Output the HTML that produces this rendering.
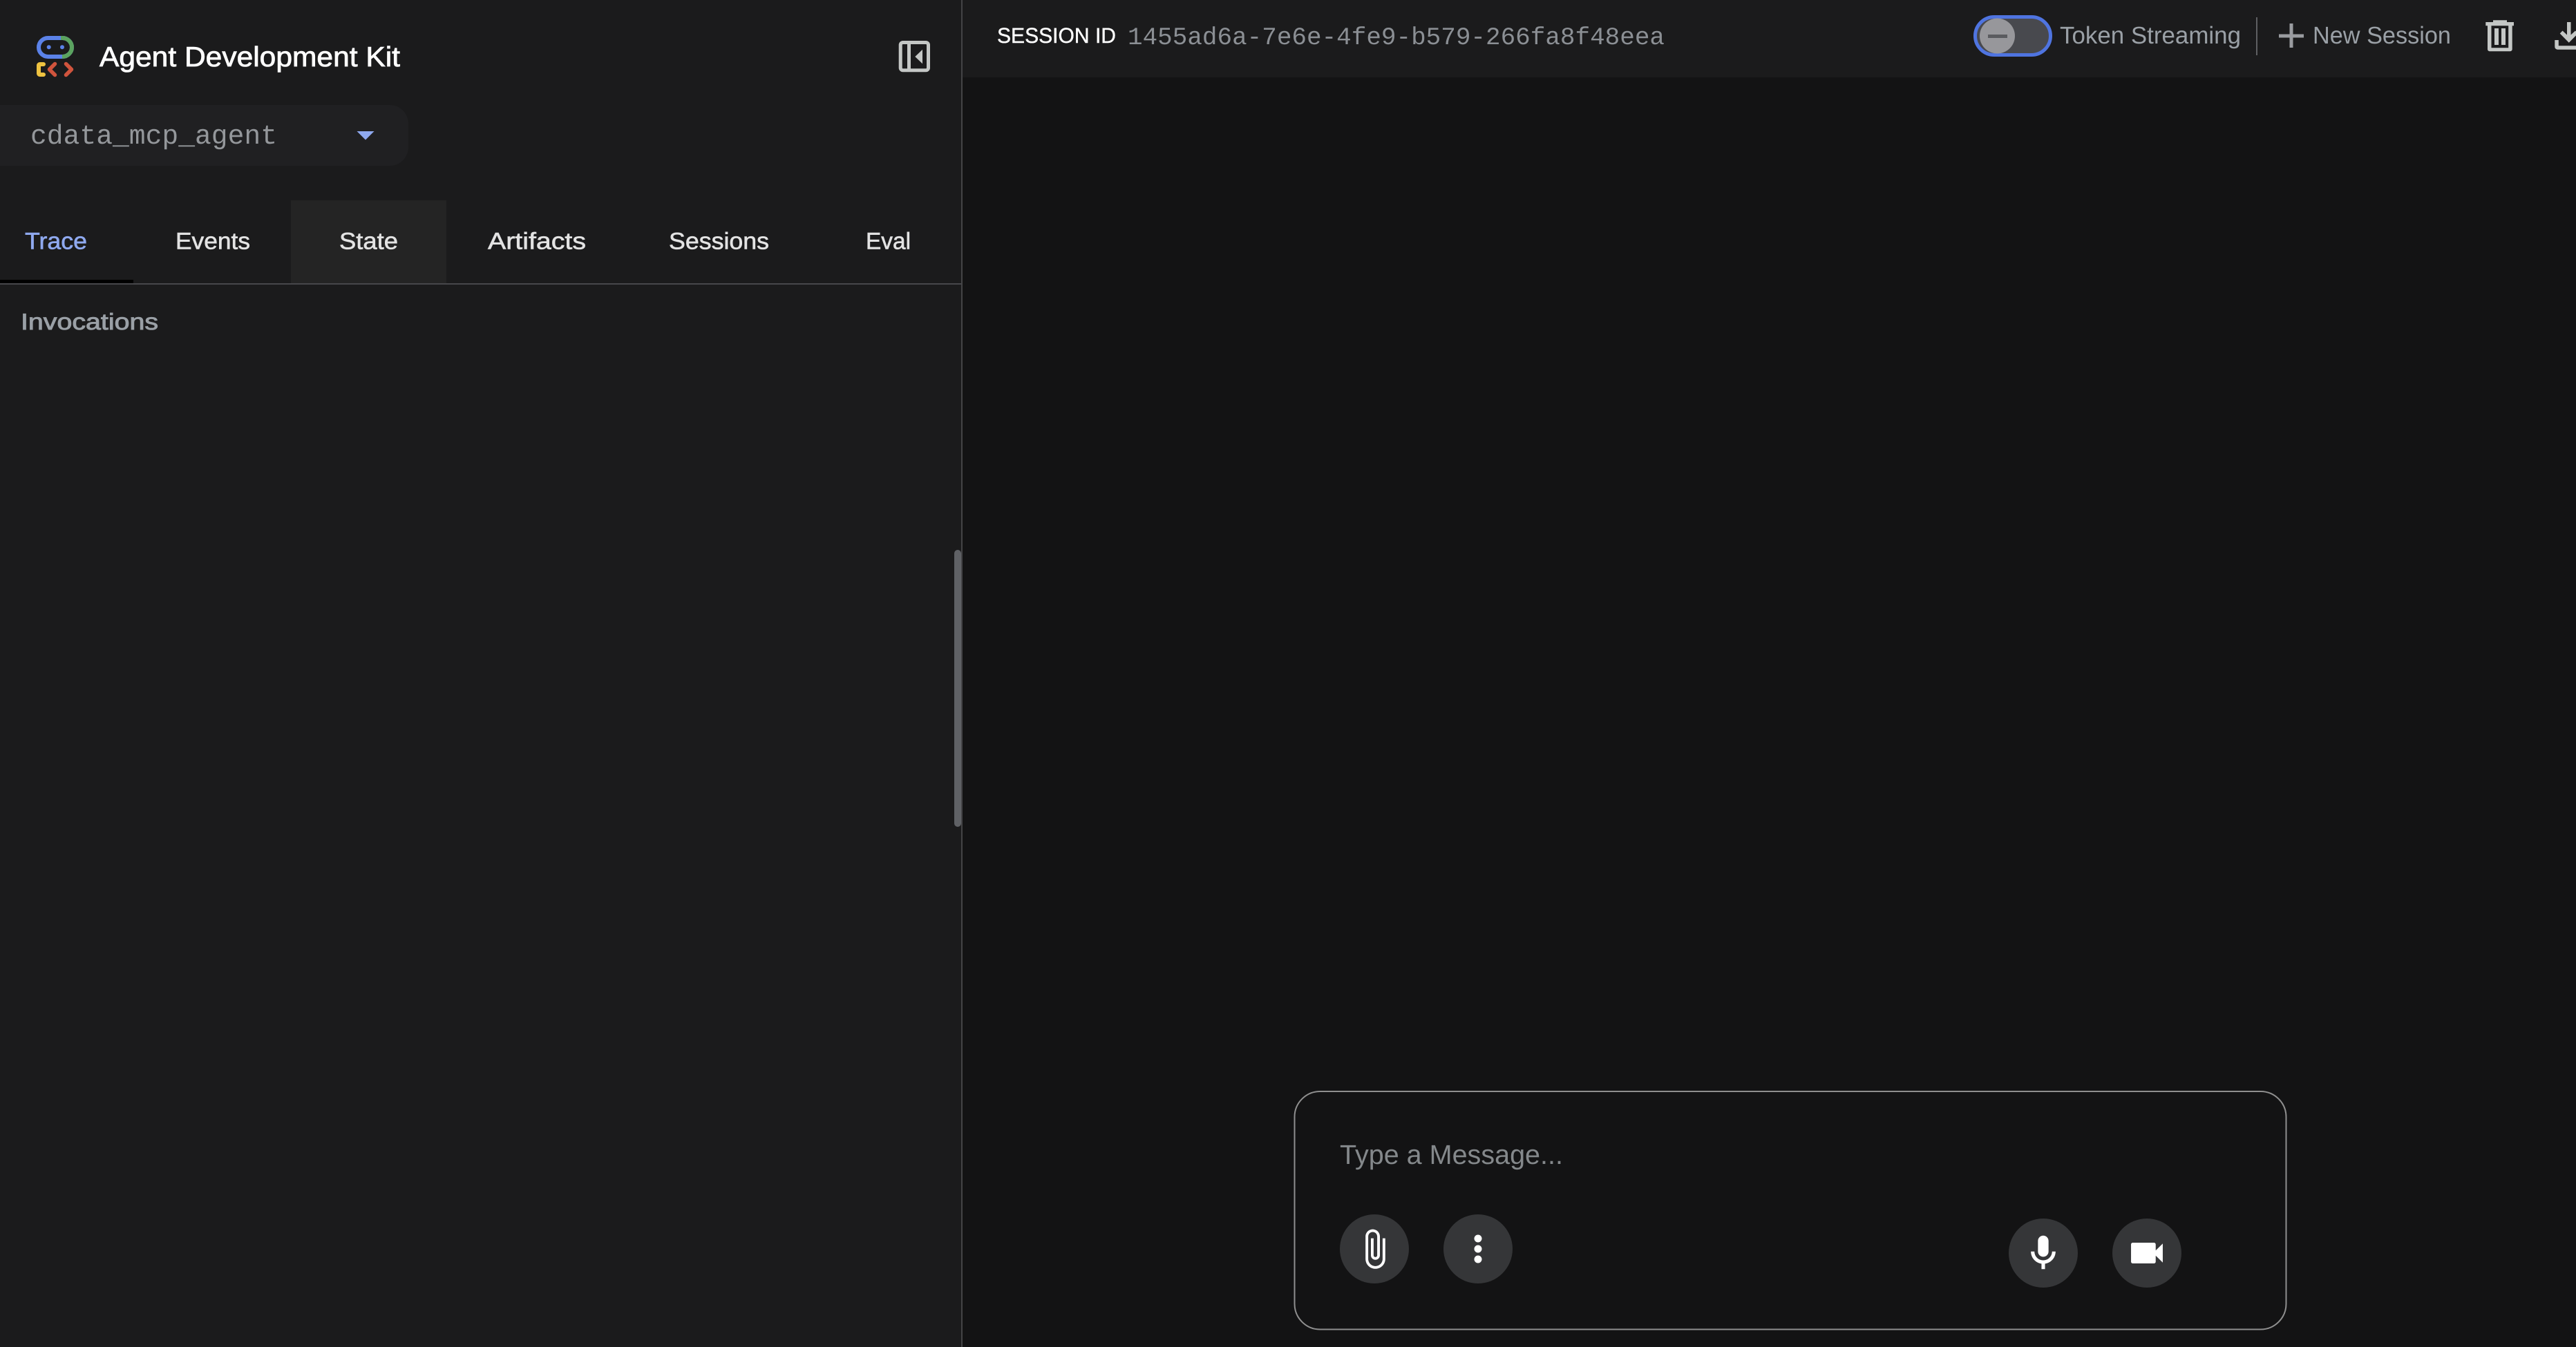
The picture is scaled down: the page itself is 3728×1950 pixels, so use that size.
<!DOCTYPE html>
<html lang="en">
<head>
<meta charset="utf-8">
<title>Agent Development Kit</title>
<style>
html,body{margin:0;padding:0;width:3728px;height:1950px;overflow:hidden;background:#131314}
svg{display:block}
text{font-family:"Liberation Sans",sans-serif;text-rendering:geometricPrecision}
.m{font-family:"Liberation Mono",monospace}
</style>
</head>
<body>
<svg width="3728" height="1950" viewBox="0 0 3728 1950" xmlns="http://www.w3.org/2000/svg">
  <!-- backgrounds -->
  <rect width="3728" height="1950" fill="#131314"/>
  <rect x="0" y="0" width="1391" height="1950" fill="#1b1b1c"/>
  <rect x="1393" y="0" width="2335" height="112" fill="#1b1b1c"/>
  <rect x="1391" y="0" width="2" height="1950" fill="#444446"/>

  <!-- logo -->
  <rect x="56" y="55" width="48" height="27" rx="13.5" fill="none" stroke="#5b82e8" stroke-width="6"/>
  <path d="M88 55h2.500a13.500 13.500 0 0 1 0 27H90" fill="none" stroke="#5ba35f" stroke-width="6"/>
  <circle cx="70.700" cy="68.300" r="3" fill="#5b82e8"/>
  <circle cx="90" cy="68.300" r="3" fill="#5b82e8"/>
  <path d="M63 93h-5.500a1.500 1.500 0 0 0-1.500 1.500v12a1.500 1.500 0 0 0 1.500 1.500H63" fill="none" stroke="#eec240" stroke-width="6" stroke-linecap="round"/>
  <path d="M79.500 92.500 71.500 100.500l8 8M95.500 92.500l8 8-8 8" fill="none" stroke="#d0543d" stroke-width="5.500" stroke-linecap="round" stroke-linejoin="round"/>

  <!-- title -->
  <text x="144" y="96" font-size="40.500" fill="#ffffff" stroke="#ffffff" stroke-width=".8" textLength="435" lengthAdjust="spacingAndGlyphs">Agent Development Kit</text>

  <!-- panel toggle -->
  <rect x="1303.200" y="61.500" width="40.300" height="40.300" rx="3.500" fill="none" stroke="#c4c7c5" stroke-width="5"/>
  <rect x="1313" y="60" width="5" height="43" fill="#c4c7c5"/>
  <path d="M1335 71.700v20.600L1324.300 82z" fill="#c4c7c5"/>

  <!-- agent select -->
  <rect x="-40" y="152" width="631" height="88" rx="27" fill="#202022"/>
  <text class="m" x="44" y="208" font-size="39.500" fill="#94979b" textLength="357" lengthAdjust="spacingAndGlyphs">cdata_mcp_agent</text>
  <path d="M516.500 190h25L529 202.500z" fill="#8fa9ef"/>

  <!-- tabs -->
  <rect x="421" y="290" width="225" height="120" fill="#242424"/>
  <rect x="0" y="405" width="193" height="5" fill="#000"/>
  <rect x="0" y="410" width="1391" height="2" fill="#47474b"/>
  <g font-size="34" fill="#e3e3e3" stroke="#e3e3e3" stroke-width=".6">
    <text x="36" y="360.500" fill="#8fa9ef" stroke="#8fa9ef" textLength="90" lengthAdjust="spacingAndGlyphs">Trace</text>
    <text x="254" y="360.500" textLength="108" lengthAdjust="spacingAndGlyphs">Events</text>
    <text x="491" y="360.500" textLength="85" lengthAdjust="spacingAndGlyphs">State</text>
    <text x="706" y="360.500" textLength="142" lengthAdjust="spacingAndGlyphs">Artifacts</text>
    <text x="968" y="360.500" textLength="145" lengthAdjust="spacingAndGlyphs">Sessions</text>
    <text x="1253" y="360.500" textLength="65" lengthAdjust="spacingAndGlyphs">Eval</text>
  </g>
  <text x="30" y="477" font-size="33" fill="#9aa0a6" stroke="#9aa0a6" stroke-width=".9" textLength="199" lengthAdjust="spacingAndGlyphs">Invocations</text>

  <!-- scrollbar -->
  <rect x="1381" y="796" width="10" height="401" rx="5" fill="#5f6165"/>

  <!-- session header -->
  <text x="1443" y="62" font-size="31" fill="#ffffff" stroke="#ffffff" stroke-width=".4" textLength="172" lengthAdjust="spacingAndGlyphs">SESSION ID</text>
  <text class="m" x="1632" y="64" font-size="35.800" fill="#8b8f94" textLength="777" lengthAdjust="spacingAndGlyphs">1455ad6a-7e6e-4fe9-b579-266fa8f48eea</text>

  <!-- toggle -->
  <rect x="2858.500" y="24.500" width="109" height="55" rx="27.500" fill="#48494e" stroke="#4f74e0" stroke-width="5"/>
  <circle cx="2890.500" cy="52" r="25.500" fill="#97979b"/>
  <rect x="2877" y="50" width="28" height="5" fill="#5a5b5f"/>
  <text x="2981" y="63" font-size="35" fill="#9aa0a6" textLength="262" lengthAdjust="spacingAndGlyphs">Token Streaming</text>
  <rect x="3265" y="25" width="2" height="55" fill="#5f6063"/>
  <path d="M3298 49.500h36v5h-36zM3313.500 34h5v35h-5z" fill="#9a9ca0"/>
  <text x="3347" y="63" font-size="35" fill="#9aa0a6" textLength="200" lengthAdjust="spacingAndGlyphs">New Session</text>

  <!-- trash -->
  <path d="M3597.300 32h10.700v-2.700h20V32h10v5.300h-40.700zM3600 37h5.500v32.200h24.700V37h5.500v34.300a3 3 0 0 1-3 3h-29.700a3 3 0 0 1-3-3zM3610 41h6v24h-6zM3620 41h6v24h-6z" fill="#c4c7c5"/>
  <!-- download -->
  <path d="M3715 32h5.500v18.500l6.500-6 3.800 4-13.050 13.200-13.050-13.200 3.800-4 6.500 6zM3697.300 58h5.500v8.200H3728v5.500h-26.700a4 4 0 0 1-4-4z" fill="#c4c7c5"/>

  <!-- input box -->
  <rect x="1873.500" y="1580" width="1435" height="344.500" rx="37" fill="#131314" stroke="#8f8f8f" stroke-width="2"/>
  <text x="1939" y="1685" font-size="39.500" fill="#84888b" textLength="323" lengthAdjust="spacingAndGlyphs">Type a Message...</text>

  <circle cx="1989" cy="1808" r="50" fill="#353638"/>
  <circle cx="2139" cy="1808" r="50" fill="#353638"/>
  <circle cx="2957" cy="1814" r="50" fill="#353638"/>
  <circle cx="3107" cy="1814" r="50" fill="#353638"/>

  <!-- attach -->
  <g transform="translate(1958 1777) scale(2.600)">
    <path fill="#fff" d="M16.500 6v11.500c0 2.210-1.790 4-4 4s-4-1.790-4-4V5c0-1.380 1.120-2.500 2.500-2.500s2.500 1.120 2.500 2.500v10.500c0 .55-.45 1-1 1s-1-.45-1-1V6H10v9.500c0 1.380 1.120 2.500 2.500 2.500s2.500-1.120 2.500-2.500V5c0-2.210-1.790-4-4-4S7 2.790 7 5v12.500c0 3.040 2.460 5.500 5.500 5.500s5.500-2.460 5.500-5.500V6h-1.500z"/>
  </g>
  <!-- more -->
  <circle cx="2139" cy="1793" r="5.500" fill="#fff"/>
  <circle cx="2139" cy="1808" r="5.500" fill="#fff"/>
  <circle cx="2139" cy="1823" r="5.500" fill="#fff"/>
  <!-- mic -->
  <g transform="translate(2926.400 1783.700) scale(2.550)">
    <path fill="#fff" d="M12 14c1.660 0 3-1.340 3-3V5c0-1.660-1.340-3-3-3S9 3.340 9 5v6c0 1.660 1.340 3 3 3zM17 11c0 2.760-2.240 5-5 5s-5-2.240-5-5H5c0 3.530 2.610 6.430 6 6.920V21h2v-3.080c3.390-.49 6-3.390 6-6.920h-2z"/>
  </g>
  <!-- video -->
  <g transform="translate(3076.400 1784) scale(2.550 2.500)">
    <path fill="#fff" d="M17 10.500V7c0-.55-.45-1-1-1H4c-.55 0-1 .45-1 1v10c0 .55.45 1 1 1h12c.55 0 1-.45 1-1v-3.500l4 4v-11l-4 4z"/>
  </g>
</svg>
</body>
</html>
